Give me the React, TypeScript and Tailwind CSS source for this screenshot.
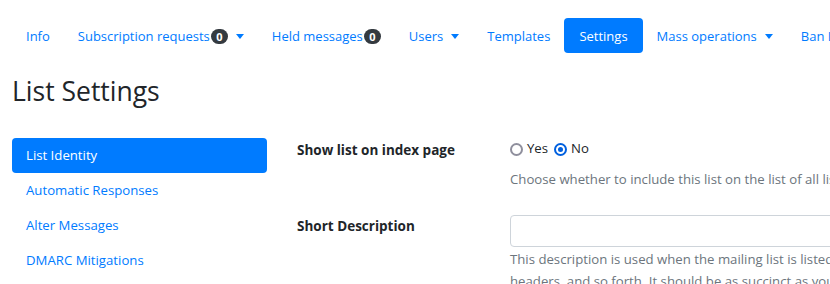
const navItems = [
  { label: "Info" },
  { label: "Subscription requests", badge: "0", caret: true },
  { label: "Held messages", badge: "0" },
  { label: "Users", caret: true },
  { label: "Templates" },
  { label: "Settings", active: true },
  { label: "Mass operations", caret: true },
  { label: "Ban List" },
];

const sideItems = ["List Identity", "Automatic Responses", "Alter Messages", "DMARC Mitigations"];

const Caret = () => (
  <span className="ml-[8px] inline-block h-0 w-0 border-x-4 border-t-[5px] border-x-transparent border-t-[#007bff]" />
);

const Badge = ({ value }: { value: string }) => (
  <span className="ml-[1px] inline-flex h-[15px] min-w-[17px] items-center justify-center rounded-full bg-[#343a40] px-[5px] text-[11px] font-bold leading-none text-white">
    {value}
  </span>
);

const Radio = ({ checked }: { checked?: boolean }) => (
  <span
    className={`inline-flex h-[13px] w-[13px] items-center justify-center rounded-full border-2 ${
      checked ? "border-[#0060df]" : "border-[#8f8f9d]"
    } bg-white`}
  >
    {checked && <span className="h-[5px] w-[5px] rounded-full bg-[#0060df]" />}
  </span>
);

export default function App() {
  return (
    <div
      className="h-[284px] w-[830px] overflow-hidden bg-white text-[#212529]"
      style={{ fontFamily: '"Open Sans", "Noto Sans", sans-serif' }}
    >
      <div className="w-[1140px] px-3">
        <ul className="mt-[18px] flex text-[13px]">
          {navItems.map((item) => (
            <li
              key={item.label}
              className={`flex h-[35px] items-center rounded pt-[2px] ${
                item.active ? "bg-[#007bff] px-[15px] text-white" : "px-[14px] text-[#007bff]"
              }`}
            >
              {item.label}
              {item.badge && <Badge value={item.badge} />}
              {item.caret && <Caret />}
            </li>
          ))}
        </ul>

        <h2 className="mt-[22px] text-[26.5px] font-normal leading-[33.6px]">List Settings</h2>

        <div className="mt-[29px] flex gap-[30px]">
          <div className="flex w-[255px] shrink-0 flex-col text-[13.2px]">
            {sideItems.map((s, i) => (
              <div
                key={s}
                className={`flex h-[35px] items-center rounded px-[14px] pt-[2px] ${
                  i === 0 ? "bg-[#007bff] text-white" : "text-[#007bff]"
                }`}
              >
                {s}
              </div>
            ))}
          </div>

          <div className="flex min-w-0 flex-1 flex-col text-[13.2px]">
            <div className="flex">
              <div className="w-[213px] shrink-0 pt-[1px] text-[13.5px] font-bold leading-[22px]">
                Show list on index page
              </div>
              <div className="min-w-0 flex-1">
                <div className="flex h-[22px] items-center pt-[1px]">
                  <Radio />
                  <span className="ml-[4px] mr-[6px]">Yes</span>
                  <Radio checked />
                  <span className="ml-[4px]">No</span>
                </div>
                <p className="mt-[7px] whitespace-nowrap pt-[1px] leading-[22px] text-[#6c757d]">
                  Choose whether to include this list on the list of all lists.
                </p>
              </div>
            </div>

            <div className="mt-[25px] flex">
              <div className="w-[213px] shrink-0 text-[13.5px] font-bold leading-[22px]">Short Description</div>
              <div className="min-w-0 flex-1">
                <input
                  type="text"
                  className="block h-[32px] w-full rounded border border-[#ced4da] bg-white px-3 outline-none"
                />
                <p className="mt-[1px] whitespace-nowrap leading-[22px] text-[#6c757d]">
                  This description is used when the mailing list is listed with other mailing lists, or in
                  <br />
                  headers, and so forth. It should be as succinct as you can get it, while still identifying what the list is.
                </p>
              </div>
            </div>
          </div>
        </div>
      </div>
    </div>
  );
}
